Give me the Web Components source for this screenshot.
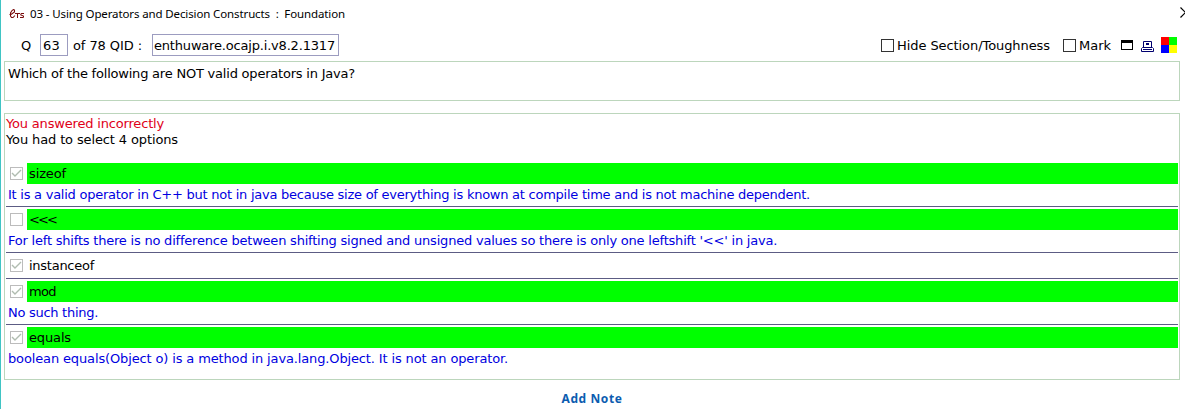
<!DOCTYPE html>
<html lang="en"><head><meta charset="utf-8"><title>Question 63</title>
<style>body{margin:0;background:#fff}</style></head>
<body><exam-window></exam-window>
<script>
const def=(name,html,init)=>customElements.define(name,class extends HTMLElement{
  constructor(){super();this.attachShadow({mode:'open'}).innerHTML=html;}
  connectedCallback(){if(init)init.call(this,this.shadowRoot);}
});

// A line of text tracked so that it fills its nominal width (attribute w).
def('fit-text',`<style>:host{display:inline-block;white-space:pre;flex:none}span{display:inline-block}</style><span><slot></slot></span>`,function(r){
  const w=+this.getAttribute('w'),s=r.querySelector('span');
  const n=(this.textContent||this.getRootNode().host.textContent).length;
  if(!w||!n)return;
  const now=s.getBoundingClientRect().width;
  s.style.letterSpacing=((w-now)/n)+'px';
  this.style.width=w+'px';
});

def('check-box',`<style>:host{display:block;flex:none;width:13px;height:13px;color:#333}:host([disabled]){color:#bcbcbc}
svg{display:block}path{display:none}:host([checked]) path{display:block}</style>
<svg width="13" height="13" fill="none" stroke="currentColor"><rect x=".5" y=".5" width="12" height="12"/><path d="M2 6L5 9L11 3" stroke="#b0bcb0" stroke-width="1.4"/></svg>`);

def('text-field',`<style>:host{display:block;box-sizing:border-box;flex:none;height:22px;border:1px solid #9c9cc0;padding-left:2px;line-height:21px}</style><slot></slot>`);

def('app-logo',`<style>:host{display:block;flex:none;width:16px;height:10px}svg{display:block}</style>
<svg width="16" height="10" fill="none" stroke="#7a0c0c" stroke-width="1.05"><path d="M1.5 5.5H3L6.5 3V1L5.5.5L4 1.5L2.5 4V7L3.5 8.5H5L7 6.5"/><path d="M7 4.5H12M9.5 4.5V9M16 4.5H13.5L12.8 5.2V6L15.5 7V8L15 8.5H12"/></svg>`);

def('title-bar',`<style>:host{display:flex;height:28px;align-items:center;padding-left:7px;font:11.5px/16px "Noto Sans",sans-serif;color:#000}
.x{display:block;margin-left:auto;margin-bottom:3px}fit-text{margin-left:6px}</style>
<app-logo></app-logo><fit-text w="315"><slot></slot></fit-text>
<svg class="x" width="5" height="11" fill="none" stroke="#000" stroke-width="1.2"><path d="M.5.5L5.5 5.5L.5 10.5"/></svg>`);

def('tool-bar',`<style>:host{display:flex;height:33px;align-items:center;padding-left:20px;box-sizing:border-box;line-height:20px}
.q{margin-right:8px}.q,.of,.label{padding-top:2px}.of{margin:0 10px 0 5px}.hide{margin-left:auto}check-box{margin-right:3px;margin-top:2px}svg{display:block;flex:none}</style>
<fit-text class="q" w="11">Q</fit-text><text-field style="width:28px"><fit-text w="17">63</fit-text></text-field>
<fit-text class="of" w="69">of 78 QID :</fit-text><text-field style="width:187px;padding-left:1px"><fit-text w="181">enthuware.ocajp.i.v8.2.1317</fit-text></text-field>
<check-box class="hide"></check-box><fit-text class="label" w="153">Hide Section/Toughness</fit-text>
<check-box style="margin-left:13px"></check-box><fit-text class="label" w="32">Mark</fit-text>
<svg style="margin:1px 0 0 10px" width="12" height="10"><path d="M0 0H12V10H0ZM1 3V9H11V3Z" fill-rule="evenodd"/></svg>
<svg style="margin:4px 0 0 8px" width="13" height="11" fill="none" stroke="#000070"><path d="M2.5 6V.5H10.5V6M.5 10.5V7.5L1.5 6.5H11.5L12.5 7.5V10.5Z"/><path d="M5 2.5H8M5 3.5H8M2 8.5H11"/></svg>
<svg style="margin:1px 8px 0 7px" width="16" height="16"><path fill="red" d="M0 0h8v8H0z"/><path fill="#0f0" d="M8 0h8v8H8z"/><path fill="#00f" d="M0 8h8v8H0z"/><path fill="#ff0" d="M8 8h8v8H8z"/></svg>`);

def('group-panel',`<style>:host{display:block;box-sizing:border-box;border:1px solid #bcd6bc;margin:0 5px 0 3px}</style><slot></slot>`);

def('answer-option',`<style>:host{display:block;border-bottom:1px solid #5c5c84;margin:0 1px 2px}
:host([last]){border:0;margin-bottom:0}
.row{display:flex;height:21px;align-items:center;padding-left:4px}
.bar{flex:1;margin-left:4px;padding-left:2px;line-height:21px;height:21px}:host([correct]) .bar{background:#0f0}
.why{height:22px;line-height:22px;padding-left:2px;color:#0000e0}.none{height:2px}</style>
<div class="row"><check-box disabled></check-box><div class="bar"><slot></slot></div></div><div class="why"><slot name="why"></slot></div>`,function(r){
  if(this.hasAttribute('checked'))r.querySelector('check-box').setAttribute('checked','');
  if(!this.querySelector('[slot=why]'))r.querySelector('.why').className='none';
});

def('exam-window',`<style>:host{display:block;box-sizing:border-box;width:1185px;height:409px;overflow:hidden;border-left:1px solid #40c4c4;font:13px/16px "DejaVu Sans",Verdana,sans-serif;color:#000}
.question{height:40px;padding:4px 0 0 3px}.answers{height:267px;margin-top:12px}.status{padding:2px 0 0 1px;height:47px;display:flex;flex-direction:column}
.bad{color:#e00018}.note{display:flex;justify-content:center;padding:11px 2px 0 0;color:#0c5cb0;font:bold 12px/16px "Noto Sans",sans-serif}</style>
<title-bar>03 - Using Operators and Decision Constructs  :  Foundation</title-bar>
<tool-bar></tool-bar>
<group-panel class="question"><fit-text w="347">Which of the following are NOT valid operators in Java?</fit-text></group-panel>
<group-panel class="answers"><div class="status"><fit-text class="bad" w="158">You answered incorrectly</fit-text><fit-text w="172">You had to select 4 options</fit-text></div>
<answer-option correct checked><fit-text w="37">sizeof</fit-text><fit-text slot="why" w="802">It is a valid operator in C++ but not in java because size of everything is known at compile time and is not machine dependent.</fit-text></answer-option>
<answer-option correct><fit-text w="27">&lt;&lt;&lt;</fit-text><fit-text slot="why" w="769">For left shifts there is no difference between shifting signed and unsigned values so there is only one leftshift '&lt;&lt;' in java.</fit-text></answer-option>
<answer-option checked><fit-text w="65">instanceof</fit-text></answer-option>
<answer-option correct checked><fit-text w="27">mod</fit-text><fit-text slot="why" w="90">No such thing.</fit-text></answer-option>
<answer-option last correct checked><fit-text w="42">equals</fit-text><fit-text slot="why" w="500">boolean equals(Object o) is a method in java.lang.Object. It is not an operator.</fit-text></answer-option>
</group-panel>
<div class="note"><fit-text w="61">Add Note</fit-text></div>`);
</script></body></html>
